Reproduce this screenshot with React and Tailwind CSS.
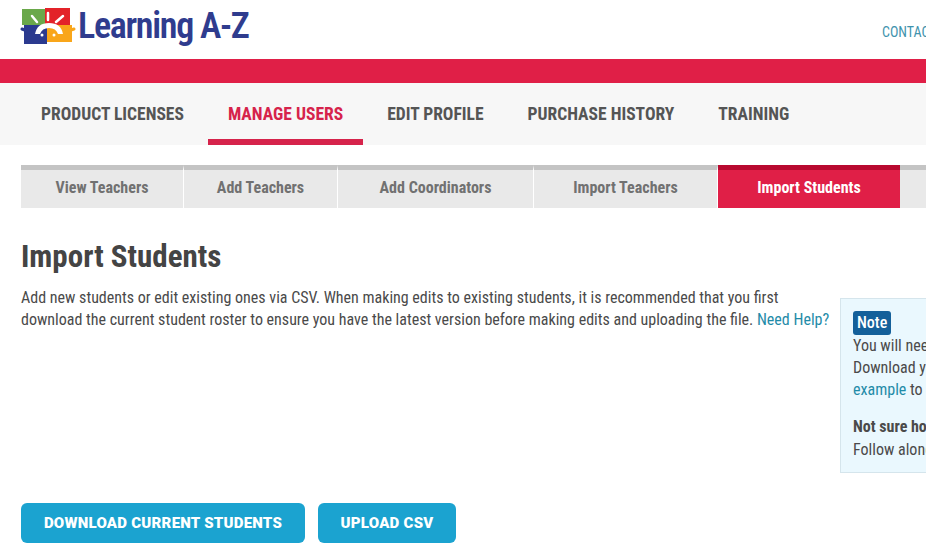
import React from "react";

const condensed = "[font-family:Roboto,'Liberation_Sans',sans-serif] [font-stretch:condensed]";

const navItems = ["PRODUCT LICENSES", "MANAGE USERS", "EDIT PROFILE", "PURCHASE HISTORY", "TRAINING"];

const tabs = [
  { label: "View Teachers", width: "w-[163px]" },
  { label: "Add Teachers", width: "w-[154px]" },
  { label: "Add Coordinators", width: "w-[196px]" },
  { label: "Import Teachers", width: "w-[184px]" },
  { label: "Import Students", width: "w-[182px]", active: true },
];

const Logo = () => (
  <svg width="56" height="37" viewBox="0 0 56 37" className="shrink-0">
    <rect x="2" y="1" width="23" height="16" fill="#6aa84a" />
    <rect x="25" y="0" width="25" height="17" fill="#e32329" />
    <rect x="4" y="17" width="23" height="19" fill="#2b3a8f" />
    <rect x="27" y="17" width="25" height="17" fill="#f9a61a" />
    <path d="M15 26 Q17 15 29 15 Q41 15 43 26 L38 26 Q36 20 29 20 Q22 20 20 26 Z" fill="#fff" />
    <path d="M12 8 L17 14 M28 5 L28 12 M43 8 L36 14" stroke="#fff" strokeWidth="2.5" strokeLinecap="round" />
    <path d="M2 21 L10 24" stroke="#2b3a8f" strokeWidth="3" strokeLinecap="round" />
    <path d="M45 24 L54 21" stroke="#f9a61a" strokeWidth="3" strokeLinecap="round" />
    <circle cx="22" cy="27" r="1.5" fill="#fff" />
    <circle cx="34" cy="27" r="1.5" fill="#fff" />
  </svg>
);

const App = () => {
  return (
    <div className={`w-[926px] h-[555px] overflow-hidden bg-white text-[#4a4a4a] ${condensed}`}>
      <header className="h-[59px] flex justify-between items-start pl-[20px]">
        <div className="flex items-center gap-[2px] pt-[7px]">
          <Logo />
          <span className="text-[36px] leading-[38px] font-semibold text-[#2f3c8e] tracking-[-1.3px] whitespace-nowrap">
            Learning A-Z
          </span>
        </div>
        <a className="mt-[24px] text-[14px] leading-[16px] text-[#3f93ad] whitespace-nowrap w-[44px] shrink-0">CONTACT US</a>
      </header>
      <div className="h-[24px] bg-[#e01f47]" />
      <nav className="h-[62px] bg-[#f7f7f7] flex gap-[4px] pl-[21px]">
        {navItems.map((item) => (
          <a
            key={item}
            className={`px-[20px] pt-[20px] text-[17.55px] leading-[22px] font-bold whitespace-nowrap border-b-[6px] ${
              item === "MANAGE USERS" ? "text-[#d6234b] border-[#d6234b]" : "text-[#555] border-transparent"
            }`}
          >
            {item}
          </a>
        ))}
      </nav>
      <div className="mt-[20px] ml-[21px] flex h-[43px]">
        {tabs.map((tab) => (
          <a
            key={tab.label}
            className={`${tab.width} shrink-0 flex items-center justify-center border-t-[5px] pb-[2px] text-[16px] font-bold ${
              tab.active
                ? "bg-[#e01f47] border-t-[#b8092f] text-white"
                : "bg-[#e9e9e9] border-t-[#c4c4c4] text-[#717171] border-r border-r-white"
            }`}
          >
            {tab.label}
          </a>
        ))}
        <div className="flex-1 bg-[#e9e9e9] border-t-[5px] border-t-[#c4c4c4]" />
      </div>
      <main className="pl-[21px] pt-[30px]">
        <h1 className="text-[31px] leading-[38px] font-bold text-[#444]">Import Students</h1>
        <div className="flex mt-[12px] gap-[10px]">
          <p className="w-[809px] shrink-0 text-[16px] leading-[22px] text-[#4a4a4a] mt-[-1px]">
            Add new students or edit existing ones via CSV. When making edits to existing students, it is recommended that you first<br />
            download the current student roster to ensure you have the latest version before making edits and uploading the file.{" "}
            <a className="text-[#1f8ba8]">Need Help?</a>
          </p>
          <aside className="w-[300px] shrink-0 h-[175px] mt-[10px] bg-[#eaf8fe] border border-[#d5e5ec] pl-[12px] pt-[12px] text-[16px] leading-[22px] whitespace-nowrap">
            <span className="inline-block h-[24px] px-[4px] rounded-[3px] bg-[#14609a] text-white text-[16px] font-medium leading-[24px]">Note</span>
            <div>You will need a CSV file.</div>
            <div>Download your roster or use the</div>
            <div><a className="text-[#1f8ba8]">example</a> to get started.</div>
            <div className="mt-[15px] font-bold">Not sure how to begin?</div>
            <div className="mt-[1px]">Follow along with the guide.</div>
          </aside>
        </div>
        <div className="flex gap-[13px] mt-[30px] [font-stretch:normal]">
          <button className="h-[40px] w-[284px] rounded-[6px] bg-[#1ba3d0] text-white text-[15px] tracking-[0.25px] font-black">DOWNLOAD CURRENT STUDENTS</button>
          <button className="h-[40px] w-[138px] rounded-[6px] bg-[#1ba3d0] text-white text-[15px] tracking-[0.25px] font-black">UPLOAD CSV</button>
        </div>
      </main>
    </div>
  );
};

export default App;
